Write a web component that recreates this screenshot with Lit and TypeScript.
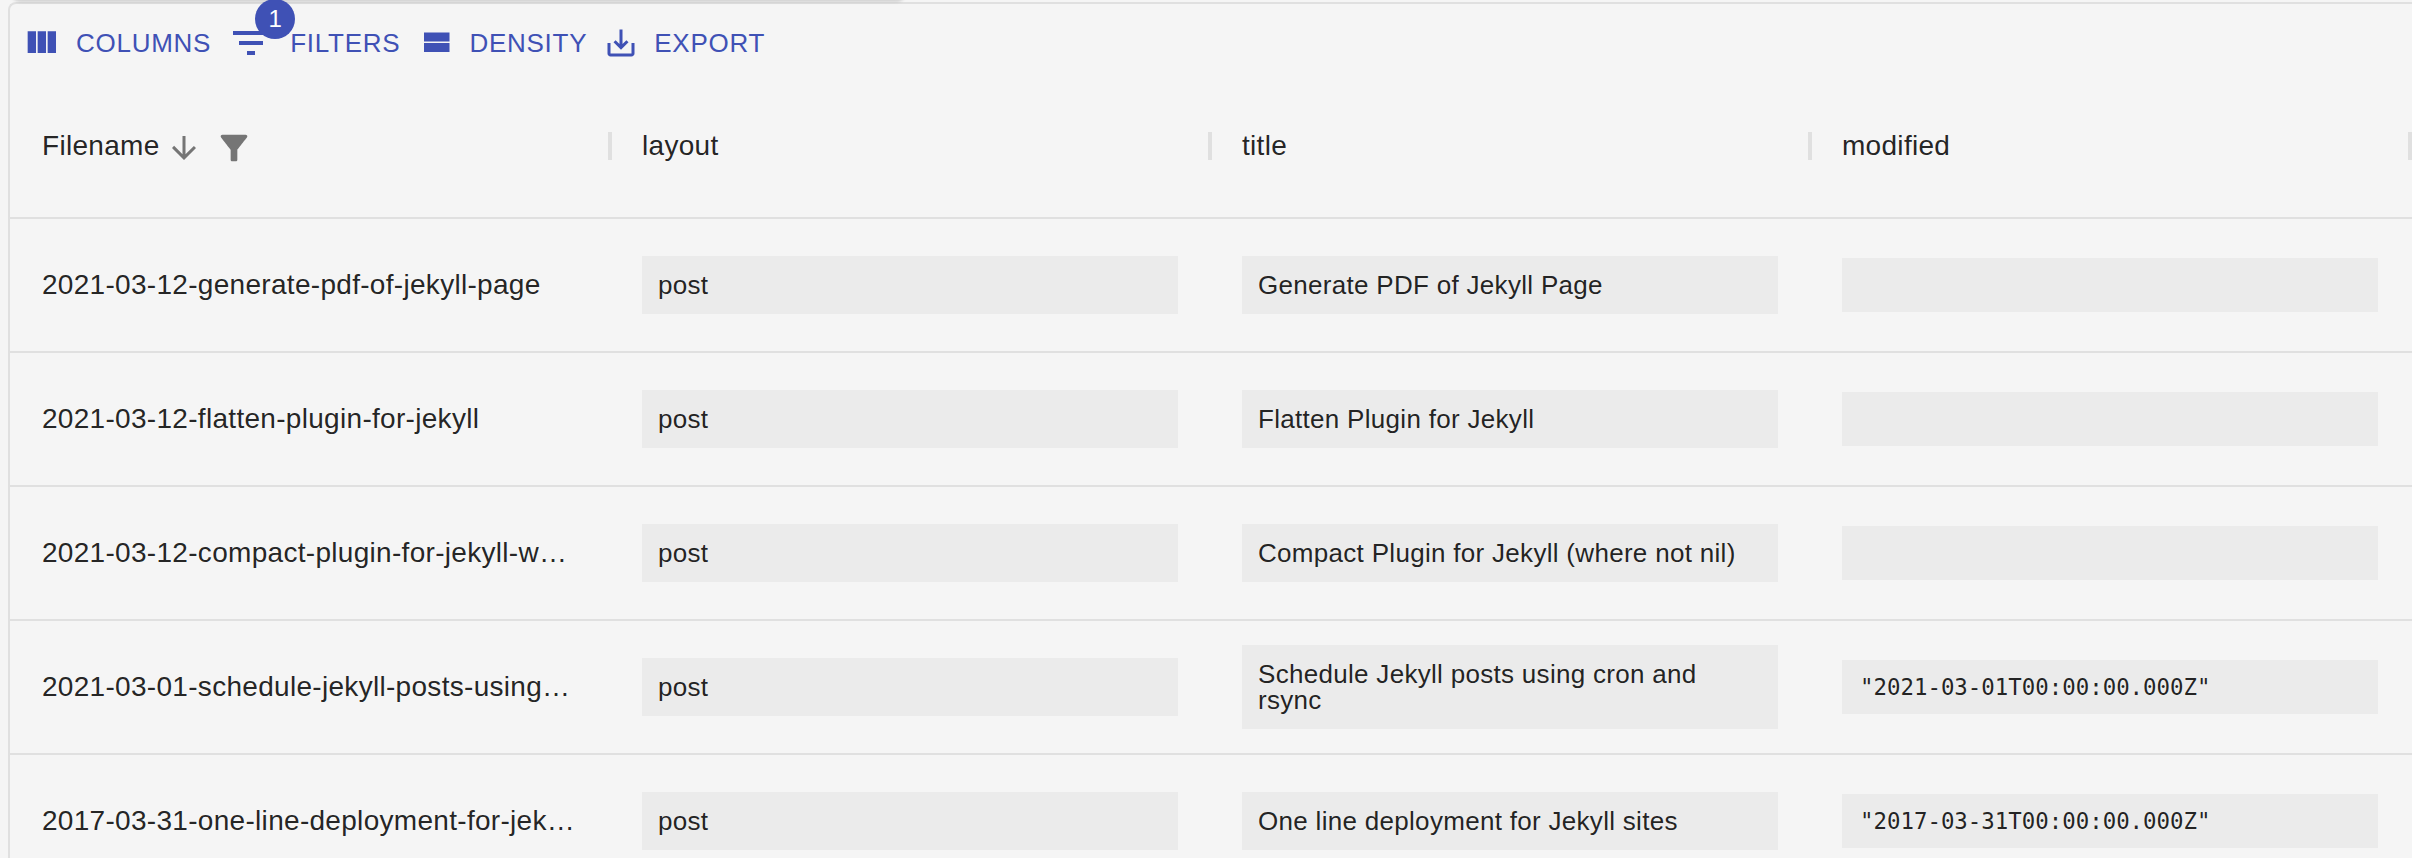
import { LitElement, html, css, svg } from 'lit';
import { customElement } from 'lit/decorators.js';

type Row = { filename: string; layout: string; title: string; modified: string };

const rows: Row[] = [
  { filename: '2021-03-12-generate-pdf-of-jekyll-page', layout: 'post', title: 'Generate PDF of Jekyll Page', modified: '' },
  { filename: '2021-03-12-flatten-plugin-for-jekyll', layout: 'post', title: 'Flatten Plugin for Jekyll', modified: '' },
  { filename: '2021-03-12-compact-plugin-for-jekyll-where-not-nil', layout: 'post', title: 'Compact Plugin for Jekyll (where not nil)', modified: '' },
  { filename: '2021-03-01-schedule-jekyll-posts-using-cron-and-rsync', layout: 'post', title: 'Schedule Jekyll posts using cron and rsync', modified: '"2021-03-01T00:00:00.000Z"' },
  { filename: '2017-03-31-one-line-deployment-for-jekyll-sites', layout: 'post', title: 'One line deployment for Jekyll sites', modified: '"2017-03-31T00:00:00.000Z"' },
];

const icons = {
  columns: svg`<path d="M10 18h5V5h-5v13zm-6 0h5V5H4v13zM16 5v13h5V5h-5z" />`,
  filters: svg`<path d="M10 18h4v-2h-4v2zM3 6v2h18V6H3zm3 7h12v-2H6v2z" />`,
  density: svg`<path d="M4 18h17v-6H4v6zM4 5v6h17V5H4z" />`,
  exportIcon: svg`<path d="M19 12v7H5v-7H3v7c0 1.1.9 2 2 2h14c1.1 0 2-.9 2-2v-7h-2zm-6 .67l2.59-2.58L17 11.5l-5 5-5-5 1.41-1.41L11 12.67V3h2v9.67z" />`,
  arrow: svg`<path d="M20 12l-1.41-1.41L13 16.17V4h-2v12.17l-5.58-5.59L4 12l8 8 8-8z" />`,
  funnel: svg`<path d="M4.25 5.66c.1.13 5.74 7.33 5.74 7.33V19c0 .55.45 1 1 1h2.01c.55 0 1-.45 1-1v-6.02s5.49-7.02 5.75-7.34C20.01 5.32 20 5 20 5c0-.55-.45-1-1.01-1H5.01C4.4 4 4 4.48 4 5c0 .2.06.44.25.66z" />`,
};

@customElement('app-root')
export class AppRoot extends LitElement {
  static styles = css`
    :host {
      display: block;
      position: relative;
      height: 858px;
      overflow: hidden;
      background: #f5f5f5;
      font-family: 'Liberation Sans', Arial, sans-serif;
      color: rgba(0, 0, 0, 0.87);
      letter-spacing: 0.3px;
    }

    .popper {
      position: absolute;
      left: 12px;
      top: -20px;
      width: 893px;
      height: 20px;
      background: #fff;
      border-radius: 8px;
      box-shadow: 0 1px 3px 1px rgba(0, 0, 0, 0.14);
    }

    .grid {
      box-sizing: border-box;
      height: 880px;
      margin-top: 2px;
      border: 2px solid #e0e0e0;
      border-right: none;
      border-radius: 8px 0 0 0;
      margin-left: 8px;
    }

    .toolbar {
      display: flex;
      align-items: center;
      box-sizing: border-box;
      height: 69px;
      padding: 9px 0 0 11px;
      color: #3f51b5;
      font-size: 26px;
      letter-spacing: 0.74px;
    }

    .btn {
      display: flex;
      align-items: center;
      margin-right: 16px;
    }

    .btn.filters {
      margin-right: 18px;
    }

    .btn span.label {
      margin-left: 15px;
    }

    .btn svg {
      fill: currentColor;
      flex: none;
    }

    .badge-wrap {
      position: relative;
      display: flex;
    }

    .badge {
      position: absolute;
      left: 28px;
      top: -20px;
      width: 40px;
      height: 40px;
      border-radius: 50%;
      background: #3f51b5;
      color: #fff;
      font-family: 'Liberation Sans', sans-serif;
      font-size: 24px;
      letter-spacing: 0;
      display: flex;
      align-items: center;
      justify-content: center;
    }

    .head,
    .row {
      display: grid;
      grid-template-columns: repeat(4, 600px);
      border-bottom: 2px solid #e0e0e0;
      box-sizing: border-box;
    }

    .head {
      height: 146px;
      align-items: center;
      font-size: 28px;
      padding-top: 2px;
    }

    .head-cell {
      display: flex;
      align-items: center;
      height: 100%;
      padding-left: 32px;
      box-sizing: border-box;
    }

    .head-cell svg {
      fill: #757575;
      flex: none;
    }

    .head-label {
      flex: 1;
      display: flex;
      align-items: center;
    }

    .arrow {
      display: flex;
      margin: 3px 12px 0 6px;
    }

    .funnel {
      display: flex;
      margin-top: 4px;
    }

    .sep {
      width: 4px;
      height: 28px;
      background: #e0e0e0;
      margin-right: -2px;
      flex: none;
    }

    .row {
      height: 134px;
      align-items: center;
    }

    .cell {
      padding: 0 32px;
      min-width: 0;
    }

    .name {
      font-size: 28px;
      white-space: nowrap;
      overflow: hidden;
      text-overflow: ellipsis;
    }

    .field {
      background: #ebebeb;
      padding: 16px;
      font-size: 26px;
      line-height: 26px;
    }

    .code {
      background: #ebebeb;
      padding: 16px 18px;
      height: 54px;
      box-sizing: border-box;
      font-family: 'DejaVu Sans Mono', monospace;
      font-size: 22.4px;
      line-height: 22px;
      letter-spacing: 0;
      white-space: pre;
    }
  `;

  private icon(body: unknown, size: number) {
    return html`<svg width=${size} height=${size} viewBox="0 0 24 24">${body}</svg>`;
  }

  render() {
    return html`
      <div class="popper"></div>
      <div class="grid">
        <div class="toolbar">
          <div class="btn">${this.icon(icons.columns, 40)}<span class="label">COLUMNS</span></div>
          <div class="btn filters">
            <div class="badge-wrap">${this.icon(icons.filters, 48)}<div class="badge">1</div></div>
            <span class="label">FILTERS</span>
          </div>
          <div class="btn">${this.icon(icons.density, 36)}<span class="label">DENSITY</span></div>
          <div class="btn">${this.icon(icons.exportIcon, 36)}<span class="label">EXPORT</span></div>
        </div>
        <div class="head">
          <div class="head-cell">
            <div class="head-label">
              Filename
              <span class="arrow">${this.icon(icons.arrow, 36)}</span>
              <span class="funnel">${this.icon(icons.funnel, 40)}</span>
            </div>
            <div class="sep"></div>
          </div>
          ${['layout', 'title', 'modified'].map(
            (h) => html`<div class="head-cell"><div class="head-label">${h}</div><div class="sep"></div></div>`
          )}
        </div>
        ${rows.map(
          (r) => html`
            <div class="row">
              <div class="cell name">${r.filename}</div>
              <div class="cell"><div class="field">${r.layout}</div></div>
              <div class="cell"><div class="field">${r.title}</div></div>
              <div class="cell"><div class="code">${r.modified}</div></div>
            </div>
          `
        )}
      </div>
    `;
  }
}
